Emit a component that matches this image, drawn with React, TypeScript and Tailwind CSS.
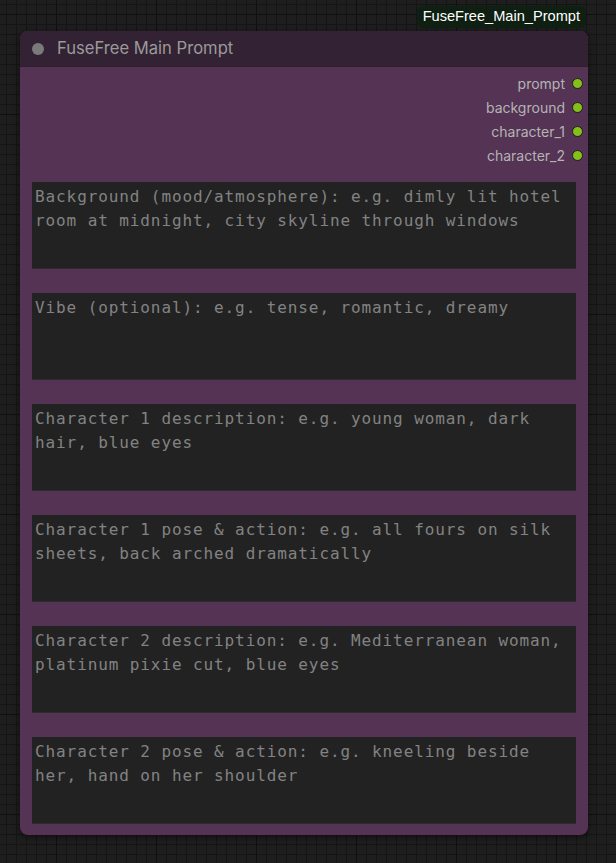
import React from "react";

const fields = [
  "Background (mood/atmosphere): e.g. dimly lit hotel room at midnight, city skyline through windows",
  "Vibe (optional): e.g. tense, romantic, dreamy",
  "Character 1 description: e.g. young woman, dark hair, blue eyes",
  "Character 1 pose & action: e.g. all fours on silk sheets, back arched dramatically",
  "Character 2 description: e.g. Mediterranean woman, platinum pixie cut, blue eyes",
  "Character 2 pose & action: e.g. kneeling beside her, hand on her shoulder",
];

const outputs = ["prompt", "background", "character_1", "character_2"];

export default function App() {
  return (
    <div className="relative w-[616px] h-[863px] overflow-hidden bg-[#1e1e1e] bg-[linear-gradient(to_right,#101010_1px,transparent_1px),linear-gradient(to_bottom,#101010_1px,transparent_1px),linear-gradient(to_right,#151515_1px,transparent_1px),linear-gradient(to_bottom,#151515_1px,transparent_1px)] bg-[size:100px_100px,100px_100px,10px_10px,10px_10px] bg-[position:56px_14px,56px_14px,6px_4px,6px_4px]">
      <div className="flex justify-end pr-[30px] pt-[6px]">
        <div className="h-[22px] px-[6px] flex items-center rounded-[6px] bg-[#0f1f12] text-white text-[14.6px] font-['Liberation_Sans',Arial,sans-serif]">
          FuseFree_Main_Prompt
        </div>
      </div>
      <div className="ml-[20px] mt-[3px] w-[568px] h-[804px] rounded-[8px] bg-[#553355] shadow-[0_2px_6px_rgba(0,0,0,0.5)] overflow-hidden flex flex-col">
        <div className="h-[36px] bg-[#332233] flex items-center pl-[12px] gap-[13px] border-b border-[#2e1e2e]">
          <div className="w-[12px] h-[12px] rounded-full bg-[#7a7a7a]" />
          <span className="text-[16.6px] text-[#9a9a9a] font-['Inter',sans-serif]">FuseFree Main Prompt</span>
        </div>
        <div className="flex flex-col pt-[4px] pr-[5px]">
          {outputs.map((o) => (
            <div key={o} className="h-[24px] flex items-center justify-end gap-[7px]">
              <span className="text-[14px] text-[#b4b4b4] font-['Inter',sans-serif]">{o}</span>
              <div className="w-[11px] h-[11px] rounded-full bg-[#84bf1c] border border-[#1c1c1c]" />
            </div>
          ))}
        </div>
        <div className="flex flex-col gap-[24px] px-[12px] pt-[15px]">
          {fields.map((f) => (
            <div
              key={f}
              className="h-[87px] bg-[#222222] border-b border-[#2c2c2c] px-[3px] pt-[3px] text-[16px] leading-[24px] tracking-[0.9px] text-[#828282] whitespace-pre-wrap font-['DejaVu_Sans_Mono',monospace]"
            >
              {f}
            </div>
          ))}
        </div>
      </div>
    </div>
  );
}
